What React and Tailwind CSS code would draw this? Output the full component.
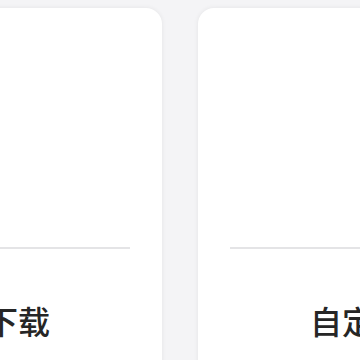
export default function App() {
    const cards = [
        { label: "下载", extra: "-ml-[126px]" },
        { label: "自定", extra: "" },
    ];

    return (
        <div className="w-[360px] h-[360px] overflow-hidden bg-[#f4f4f6]">
            <div className="flex gap-[36px] pt-[8px]">
                {cards.map((c) => (
                    <div
                        key={c.label}
                        className={`${c.extra} shrink-0 w-[288px] h-[372px] bg-white rounded-[16px] shadow-[0_0_5px_rgba(0,0,0,0.07)] flex flex-col px-[32px]`}
                    >
                        <div className="h-[239px]" />
                        <div className="h-[2px] bg-[#e4e4e6]" />
                        <div
                            className="mt-[55px] text-center text-[32px] leading-[32px] font-medium text-[#262626]"
                            style={{ fontFamily: '"Noto Sans CJK SC", sans-serif' }}
                        >
                            {c.label}
                        </div>
                    </div>
                ))}
            </div>
        </div>
    );
}
